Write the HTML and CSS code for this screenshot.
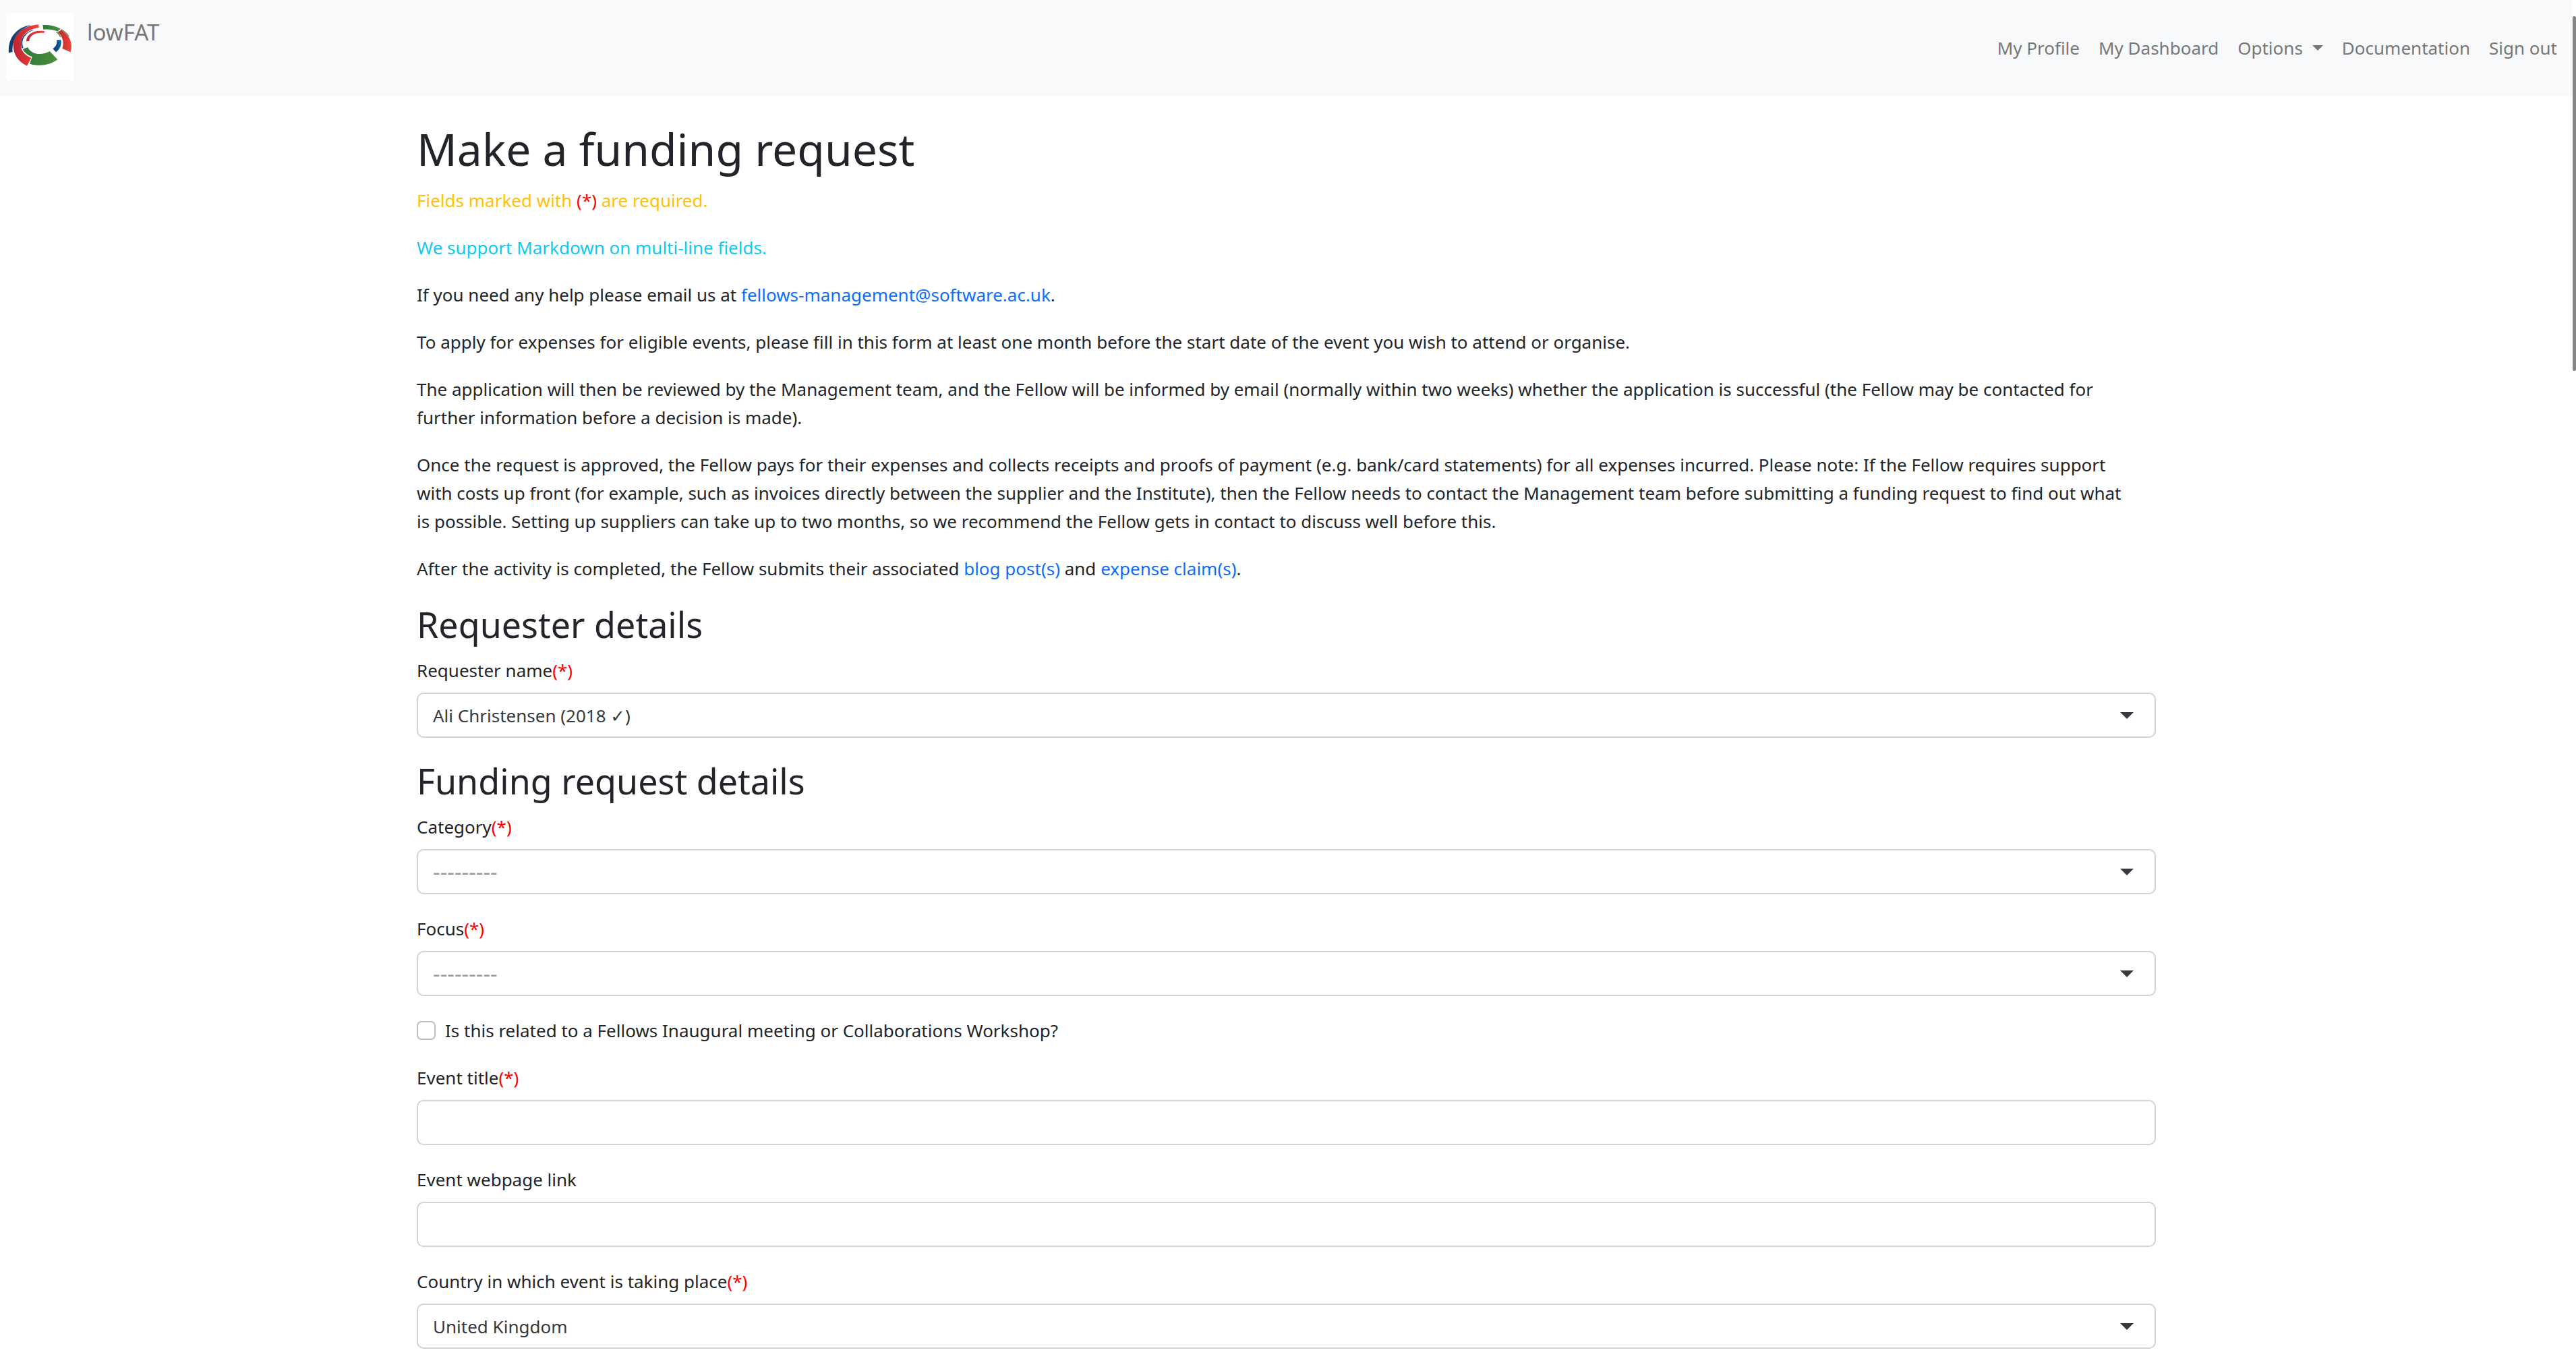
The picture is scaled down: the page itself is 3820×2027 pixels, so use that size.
FILE: index.html
```html
<!DOCTYPE html>
<html lang="en">
<head>
<meta charset="utf-8">
<meta name="viewport" content="width=device-width, initial-scale=1">
<title>lowFAT - Make a funding request</title>
<link rel="stylesheet" href="styles.css">
</head>
<body>
<nav class="navbar">
  <a class="brand" href="#">
    <svg class="brand-logo" viewBox="27 57 300 300" aria-hidden="true">
      <defs>
        <linearGradient id="red"><stop offset="0" stop-color="#be2530"/><stop offset="1" stop-color="#ee443a"/></linearGradient>
        <linearGradient id="green"><stop offset="0" stop-color="#2c7a38"/><stop offset="1" stop-color="#4c8f3d"/></linearGradient>
        <linearGradient id="blue"><stop offset="0" stop-color="#103b6b"/><stop offset="1" stop-color="#0763a8"/></linearGradient>
      </defs>
      <rect x="27" y="57" width="300" height="300" fill="#fff"/>
      <path fill="url(#blue)" d="M133 112C83 120 34 160 39 235L56 231C52 176 84 131 133 114Z"/>
      <path fill="url(#red)" d="M171 109C105 115 59 150 59 202C59 245 84 276 120 293L139 257C110 245 93 225 93 200C92 158 121 131 173 122Z"/>
      <path fill="url(#blue)" d="M148 132C108 145 84 174 98 215L104 212C91 180 109 148 148 134Z"/>
      <path fill="url(#red)" d="M198 139C153 132 118 151 117 184L130 183C131 157 158 143 196 147Z"/>
      <path fill="url(#green)" d="M190 111C220 110 249 116 270 128L256 140C237 131 217 129 193 131Z"/>
      <path fill="url(#green)" d="M273 130C289 138 301 149 308 161L305 162C296 149 285 140 271 132ZM254 142C263 148 269 156 270 165L267 165C264 156 258 149 249 143Z"/>
      <path fill="url(#red)" d="M257 143L273 133C309 157 326 190 314 232L277 216C286 187 279 161 257 143Z"/>
      <path fill="url(#blue)" d="M252 178H271C275 200 267 219 249 232L235 217C250 207 255 194 252 178Z"/>
      <path fill="url(#green)" d="M101 219L123 210C142 246 188 247 221 228L256 265C220 292 175 296 132 284L143 253C125 247 111 236 101 219Z"/>
    </svg>
    <span>lowFAT</span>
  </a>
  <ul class="nav-links">
    <li><a href="#">My Profile</a></li>
    <li><a href="#">My Dashboard</a></li>
    <li><a class="nav-dropdown" href="#">Options</a></li>
    <li><a href="#">Documentation</a></li>
    <li><a href="#">Sign out</a></li>
  </ul>
</nav>
<main class="container">
  <h1>Make a funding request</h1>
  <p class="text-warning">Fields marked with <span class="required">(*)</span> are required.</p>
  <p class="text-info">We support Markdown on multi-line fields.</p>
  <p>If you need any help please email us at <a href="mailto:fellows-management@software.ac.uk">fellows-management@software.ac.uk</a>.</p>
  <p>To apply for expenses for eligible events, please fill in this form at least one month before the start date of the event you wish to attend or organise.</p>
  <p>The application will then be reviewed by the Management team, and the Fellow will be informed by email (normally within two weeks) whether the application is successful (the Fellow may be contacted for further information before a decision is made).</p>
  <p>Once the request is approved, the Fellow pays for their expenses and collects receipts and proofs of payment (e.g. bank/card statements) for all expenses incurred. Please note: If the Fellow requires support with&nbsp;costs up front (for example, such as invoices directly between the supplier and the Institute), then the Fellow needs to contact the Management team before submitting a funding request to find out what is&nbsp;possible. Setting up suppliers can take up to two months, so we recommend the Fellow gets in contact to discuss well before this.</p>
  <p>After the activity is completed, the Fellow submits their associated <a href="#">blog post(s)</a> and <a href="#">expense claim(s)</a>.</p>
  <form>
    <h2>Requester details</h2>
    <div class="field">
      <label for="fellow">Requester name<span class="required">(*)</span></label>
      <div class="select"><select id="fellow"><option>Ali Christensen (2018 ✓)</option></select></div>
    </div>
    <h2>Funding request details</h2>
    <div class="field">
      <label for="category">Category<span class="required">(*)</span></label>
      <div class="select"><select id="category" class="empty"><option>---------</option></select></div>
    </div>
    <div class="field">
      <label for="focus">Focus<span class="required">(*)</span></label>
      <div class="select"><select id="focus" class="empty"><option>---------</option></select></div>
    </div>
    <div class="check">
      <input type="checkbox" id="mandatory">
      <label for="mandatory">Is this related to a Fellows Inaugural meeting or Collaborations Workshop?</label>
    </div>
    <div class="field">
      <label for="title">Event title<span class="required">(*)</span></label>
      <input type="text" id="title">
    </div>
    <div class="field">
      <label for="url">Event webpage link</label>
      <input type="url" id="url">
    </div>
    <div class="field">
      <label for="country">Country in which event is taking place<span class="required">(*)</span></label>
      <div class="select"><select id="country"><option>United Kingdom</option></select></div>
    </div>
  </form>
</main>
<div class="scroll-thumb"></div>
</body>
</html>
```
FILE: styles.css
```css
*, *::before, *::after { box-sizing: border-box; }

body {
  margin: 0;
  padding-right: 5px;
  background: #fff;
  color: #212529;
  font-family: "Noto Sans", "Open Sans", "DejaVu Sans", sans-serif;
  font-size: 26px;
  line-height: 42px;
}

a { color: #0d6efd; text-decoration: none; }

.navbar {
  display: flex;
  align-items: center;
  justify-content: space-between;
  padding: 14px 9px;
  background: #f8f9fa;
}
.brand {
  display: flex;
  align-items: flex-start;
  gap: 20px;
  padding: 5px 0 9px;
  color: #777;
  font-size: 33px;
  line-height: 58px;
}
.brand-logo { width: 100px; height: 100px; }
.nav-links {
  display: flex;
  margin: 0;
  padding: 0;
  list-style: none;
}
.nav-links a { display: block; padding: 14px; color: #777; }
.nav-dropdown::after {
  content: "";
  display: inline-block;
  margin-left: 14px;
  vertical-align: 6px;
  border: 8px solid transparent;
  border-top-color: currentColor;
  border-bottom: 0;
}

.container { max-width: 2579px; margin: 36px auto 0; }

h1, h2 { margin: 0 0 14px; font-weight: 400; }
h1 { font-size: 66px; line-height: 84px; }
h2 { font-size: 52px; line-height: 67px; }
p { margin: 0 0 28px; }

.text-warning { color: #ffc107; }
.text-info { color: #0dcaf0; }
.required { color: #f00; }

.field { display: flex; flex-direction: column; gap: 12px; margin-bottom: 30px; }
.field:last-child { margin-bottom: 0; }
.field input, .select select {
  width: 100%;
  height: 67px;
  margin: 0;
  padding: 0 22px;
  border: 2px solid #ced4da;
  border-radius: 10px;
  background: #fff;
  color: #343a40;
  font: inherit;
}
.select { display: grid; align-items: center; }
.select select { grid-area: 1 / 1; appearance: none; }
.select select.empty { color: #999; font-size: 33px; }
.select::after {
  content: "";
  grid-area: 1 / 1;
  justify-self: end;
  margin-right: 33px;
  border: 10px solid transparent;
  border-top-color: #343a40;
  border-bottom: 0;
  pointer-events: none;
}

.check { display: flex; align-items: center; gap: 14px; margin-bottom: 28px; }
.check input {
  width: 28px;
  height: 28px;
  margin: 0;
  border: 2px solid #bfbfbf;
  border-radius: 7px;
  appearance: none;
}

.scroll-thumb {
  position: fixed;
  top: 24px;
  right: 0;
  width: 5px;
  height: 526px;
  border-radius: 3px;
  background: #858585;
}
```
